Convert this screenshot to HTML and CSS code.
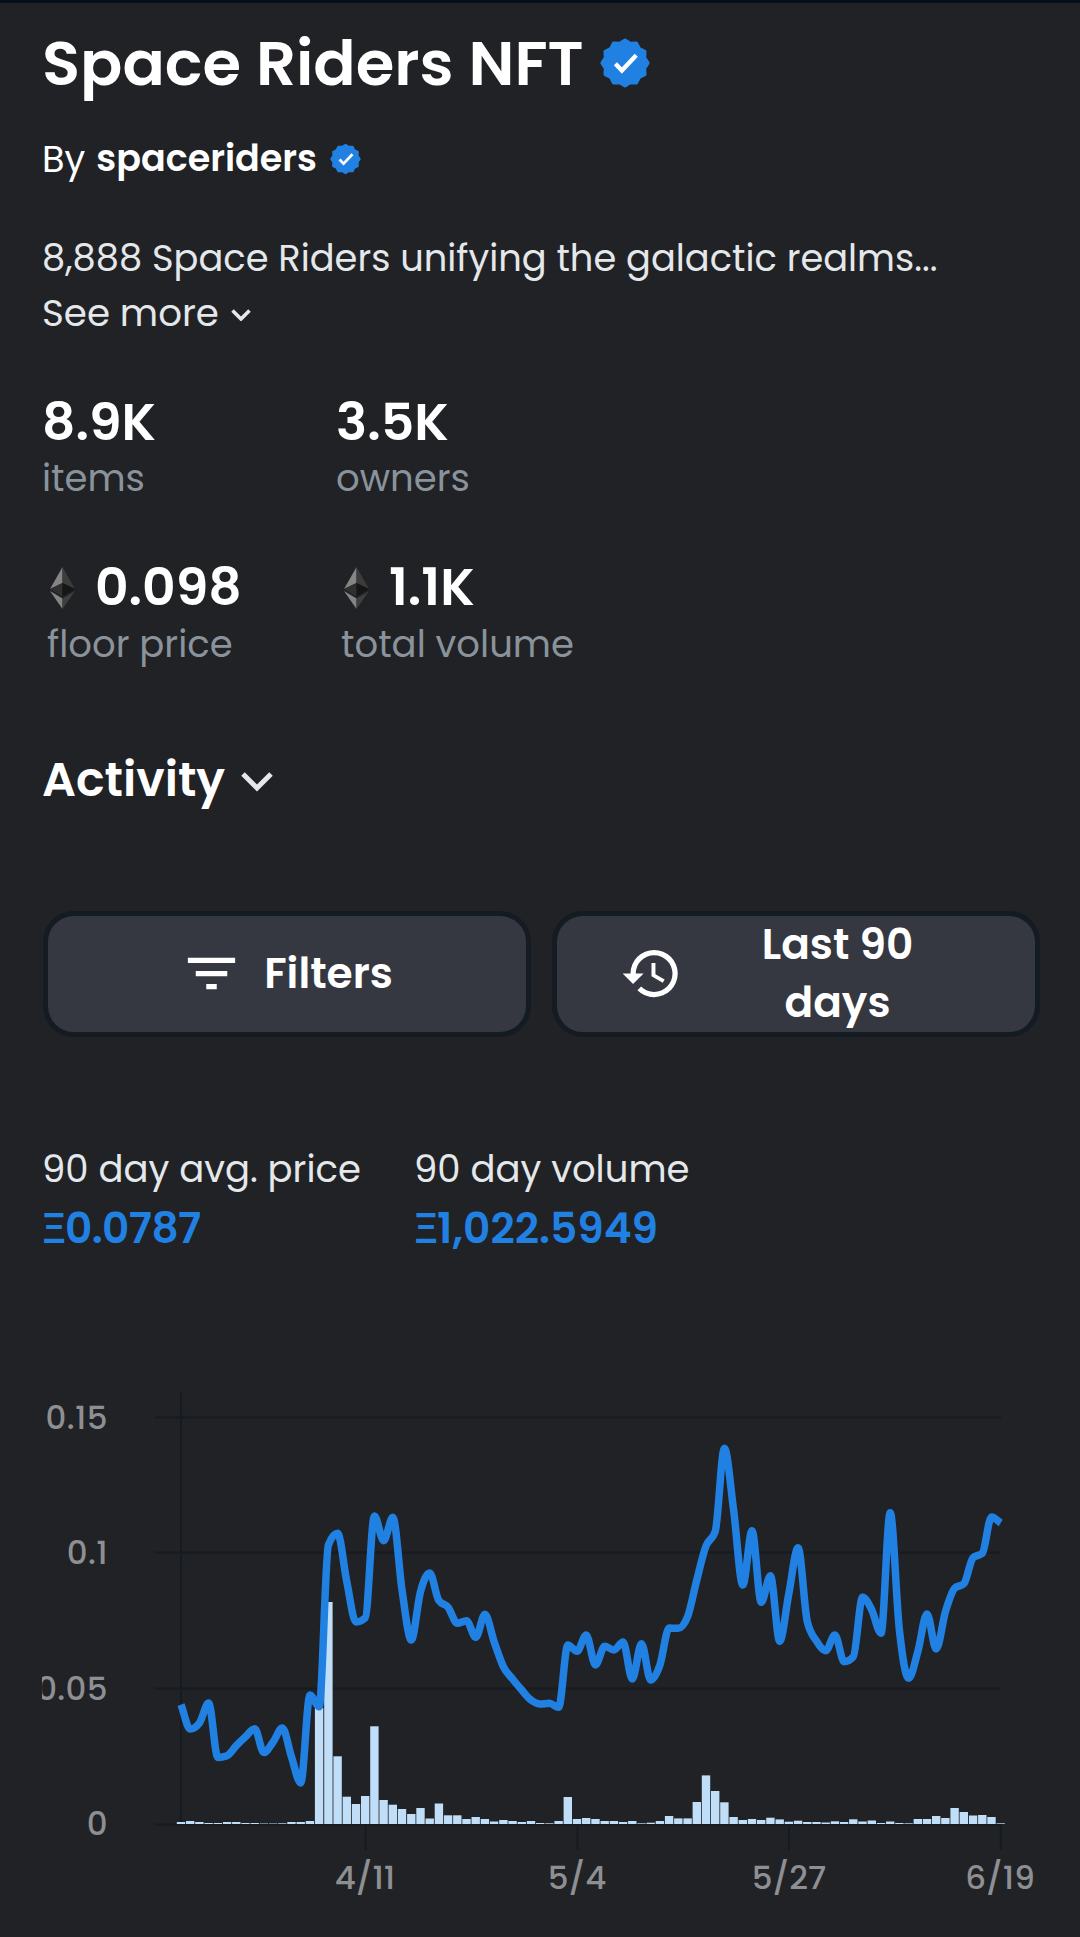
FILE: index.html
```
<!DOCTYPE html>
<html lang="en">
<head>
	<meta charset="UTF-8">
	<title>Space Riders NFT</title>
<link rel="stylesheet" href="styles.css">
</head>
<body>
<svg width="0" height="0" class="defs">
  <symbol id="seal" viewBox="-12 -12 24 24">
    <path d="M0-11 2.51-9.37 5.5-9.53 6.86-6.86 9.53-5.5 9.37-2.51 11 0 9.37 2.51 9.53 5.5 6.86 6.86 5.5 9.53 2.51 9.37 0 11-2.51 9.37-5.5 9.53-6.86 6.86-9.53 5.5-9.37 2.51-11 0-9.37-2.51-9.53-5.5-6.86-6.86-5.5-9.53-2.51-9.37Z" fill="#2081e2" stroke="#2081e2" stroke-width="1.6" stroke-linejoin="round"/>
    <path d="M-4.6.4-1.5 3.6 5.4-3.7" fill="none" stroke="#fff" stroke-width="2.1"/>
  </symbol>
  <symbol id="eth" viewBox="0 0 25 42">
    <path d="M12.5 0 0 22l12.5-6z" fill="#858585"/>
    <path d="M12.5 0 25 22l-12.5-6z" fill="#3c3c3c"/>
    <path d="M0 22l12.5-6v13.5z" fill="#303030"/>
    <path d="M25 22l-12.5-6v13.5z" fill="#161616"/>
    <path d="M0 24 12.5 31.5V42z" fill="#858585"/>
    <path d="M25 24 12.5 31.5V42z" fill="#3f3f3f"/>
  </symbol>
</svg>
<div class="page">
  <h1 class="title">Space Riders NFT<svg class="seal"><use href="#seal"/></svg></h1>
  <div class="author">By <b>spaceriders</b><svg class="seal"><use href="#seal"/></svg></div>
  <div class="about">
    <p>8,888 Space Riders unifying the galactic realms...</p>
    <p class="more">See more<svg viewBox="0 0 20 12"><path d="M1.5 1.5 10 10l8.5-8.5"/></svg></p>
  </div>
  <div class="stats">
    <div class="stat"><div class="num">8.9K</div><div class="name">items</div></div>
    <div class="stat"><div class="num">3.5K</div><div class="name">owners</div></div>
    <div class="stat eth"><div class="num"><svg><use href="#eth"/></svg>0.098</div><div class="name">floor price</div></div>
    <div class="stat eth"><div class="num"><svg><use href="#eth"/></svg>1.1K</div><div class="name">total volume</div></div>
  </div>
  <h2 class="activity">Activity<svg viewBox="0 0 32 20"><path d="M2 2l14 14L30 2"/></svg></h2>
  <div class="buttons">
    <div class="btn"><svg viewBox="0 0 24 24"><path d="M10 18h4v-2h-4v2zM3 6v2h18V6H3zm3 7h12v-2H6v2z"/></svg>Filters</div>
    <div class="btn range"><svg viewBox="0 0 24 24"><path d="M13 3a9 9 0 0 0-9 9H1l3.89 3.89.07.14L9 12H6c0-3.87 3.13-7 7-7s7 3.13 7 7-3.13 7-7 7c-1.93 0-3.68-.79-4.94-2.06l-1.42 1.42A8.954 8.954 0 0 0 13 21a9 9 0 0 0 0-18zm-1 5v5l4.28 2.54.72-1.21-3.5-2.08V8H12z"/></svg><div class="rangeText">Last 90<br>days</div></div>
  </div>
  <div class="summary">
    <div class="avg"><p>90 day avg. price</p><div class="value"><i>Ξ</i>0.0787</div></div>
    <div><p>90 day volume</p><div class="value"><i>Ξ</i>1,022.5949</div></div>
  </div>
  <svg class="chart" viewBox="42 1380 1038 540">
    <path class="grid" d="M155 1417.5H1001M155 1552.5H1001M155 1688.5H1001M155 1824.5H1001M181 1391V1824M365.5 1824V1850M577.5 1824V1850M789 1824V1850M1000.7 1824V1850"/>
    <g id="bars"></g>
    <path id="price"/>
    <g class="yText">
      <text x="108" y="1429">0.15</text>
      <text x="108" y="1564">0.1</text>
      <text x="108" y="1700">0.05</text>
      <text x="108" y="1835">0</text>
    </g>
    <g class="xText">
      <text x="365" y="1889">4/11</text>
      <text x="577" y="1889">5/4</text>
      <text x="789" y="1889">5/27</text>
      <text x="1000" y="1889">6/19</text>
    </g>
  </svg>
</div>
<script src="chart.js"></script>
</body>
</html>
```
FILE: styles.css
```
* {box-sizing: border-box;}
body {margin: 0; background-color: #202225; color: #fff; font-family: Poppins, Inter, sans-serif;}
h1,h2,p {margin: 0;}
.defs {position: absolute;}
.page {height: 1937px; padding: 20px 40px 0 42px; border-top: 3px solid #04111d; overflow: hidden;}

.title {display: flex; align-items: center; font-size: 62.5px; line-height: 80px; font-weight: 600;}
.title .seal {width: 50px; height: 52px; margin: -1px 0 0 16px;}
.author {display: flex; align-items: center; margin-top: 31px; font-size: 36.8px; line-height: 50px;}
.author b {margin-left: 11px; font-size: 36.5px; font-weight: 600;}
.author .seal {width: 31px; height: 32px; margin-left: 13px;}

.about {margin-top: 47px; color: #e5e8eb; font-size: 36.8px; line-height: 55px; white-space: nowrap;}
.more {display: flex; align-items: center; font-size: 37.2px;}
.more svg {width: 20px; height: 12px; margin: 2px 0 0 12px;}
.more path,.activity path {fill: none; stroke: #e5e8eb; stroke-width: 3.6;}

.stats {display: grid; grid-template-columns: 294px 294px; row-gap: 53px; margin-top: 51px;}
.num {display: flex; align-items: center; font-size: 52px; line-height: 60px; font-weight: 600;}
.num svg {width: 25px; height: 42px; margin: 2px 20px 0 8px;}
.name {color: #8a939b; font-size: 37px; line-height: 52px;}
.eth .name {padding: 1px 0 0 5px;}

.activity {display: flex; align-items: center; margin-top: 80px; font-size: 47.5px; line-height: 60px; font-weight: 600;}
.activity svg {width: 32px; height: 20px; margin: 4px 0 0 16px;}
.activity path {stroke-width: 5;}

.buttons {display: flex; gap: 21px; margin: 101px 0 0 1px;}
.btn {display: flex; align-items: center; justify-content: center; width: 488px; height: 126px; border: 5px solid #151b22; border-radius: 31px; background-color: #353840; font-size: 42.3px; line-height: 58px; font-weight: 600; text-align: center;}
.btn svg {width: 63px; height: 63px; margin: -1px 21px 0 -1px; fill: #fff;}
.range {justify-content: flex-start; padding-left: 64px;}
.rangeText {width: 267px;}

.summary {display: flex; margin-top: 105px; color: #e5e8eb; font-size: 37px; line-height: 54px; white-space: nowrap;}
.avg {width: 372px;}
.value {display: flex; margin-top: 3px; color: #2081e2; font-size: 42.3px; line-height: 60px; font-weight: 600;}
.avg .value {letter-spacing: -0.6px;}
.value i {width: 23px; font-family: Roboto, sans-serif; font-style: normal; font-weight: 500;}

.chart {display: block; width: 1038px; height: 540px; margin-top: 121px;}
.chart .grid {fill: none; stroke: #151b22; stroke-width: 2;}
#bars {fill: #c0def7;}
#price {fill: none; stroke: #2081e2; stroke-width: 7.5; stroke-linejoin: round;}
.chart text {fill: #8e8f92; font-size: 32.5px; font-weight: 500;}
.yText {text-anchor: end; letter-spacing: 0.4px;}
.xText {text-anchor: middle;}
```
FILE: chart.js
```
(function(){
  var x0 = 181,
      step = 9.21,
      base = 1824;
  // one entry per day, 3/22 - 6/19
  var price = [1704.7,1729,1723,1703,1757.4,1755.7,1745.7,1736.7,1728.8,1752.6,1742,1728,1757,1783,1695,
      1706.7,1545,1533.3,1581.7,1622,1618,1516,1540.7,1517.3,1590,1640,1591.7,1573,1600.7,1607.3,
      1623.3,1620.7,1637.3,1614.3,1641.7,1666.7,1679,1690,1700,1704,1703.3,1707.3,1645,1651.3,1635,
      1665,1646.3,1650,1642,1679,1643.7,1680,1665,1628,1628.3,1616.7,1580,1546,1531.7,1448.3,
      1510,1585,1530.7,1602.3,1575.7,1641.3,1593.3,1547.7,1621.7,1641,1650.7,1635,1661.7,1656.7,1597.3,
      1610,1633.3,1512.7,1630,1678.3,1651.7,1614,1649,1611.7,1588.3,1583.7,1557.7,1553.3,1517,1523];
  var volume = [2,3,2,1,1,2,2,1,1,0.5,0.5,0.7,2,2,3,
      116,222,67.7,27.3,20,28,97.7,24,19.3,15,10,16,5.5,20.5,8.7,
      8.7,5,7,5,2.5,4,3,2,3,1,0.7,3,27,5,6,
      5,3,3,2,3,0.7,1.3,3,8,5.6,5.6,22,48.6,33,21.7,
      7,4,5,4,6.3,4.6,2.3,3.3,2,2,1.5,2.7,2,4.7,2.5,
      3.5,1,2.5,1,0.7,5,5,8,6,16,12,8.5,9,7,0.7];

  var bars = '';
  for(var i = 0; i < volume.length; i++){
    bars += '<rect x="'+ (x0 + i*step - 4.2).toFixed(1) +'" y="'+ (base - volume[i]) +'" width="8.4" height="'+ volume[i] +'"/>';
  }
  document.getElementById('bars').innerHTML = bars;

  // monotone tangents, flat at every local peak
  var slope = function(i){
    if(i == 0){ return (price[1] - price[0])/step; }
    if(i == price.length - 1){ return (price[i] - price[i-1])/step; }
    var a = (price[i] - price[i-1])/step,
        b = (price[i+1] - price[i])/step;
    if(a*b <= 0){ return 0; }
    return (a > 0 ? 1 : -1)*Math.min(Math.abs(a)*2, Math.abs(b)*2, Math.abs(a + b)/2);
  }
  var d = 'M'+ x0 +' '+ price[0];
  for(i = 1; i < price.length; i++){
    var x = x0 + i*step;
    d += 'C'+ [x - step*2/3, price[i-1] + slope(i-1)*step/3, x - step/3, price[i] - slope(i)*step/3, x, price[i]].map(function(n){ return n.toFixed(1); }).join(' ');
  }
  document.getElementById('price').setAttribute('d', d);
})()
```
